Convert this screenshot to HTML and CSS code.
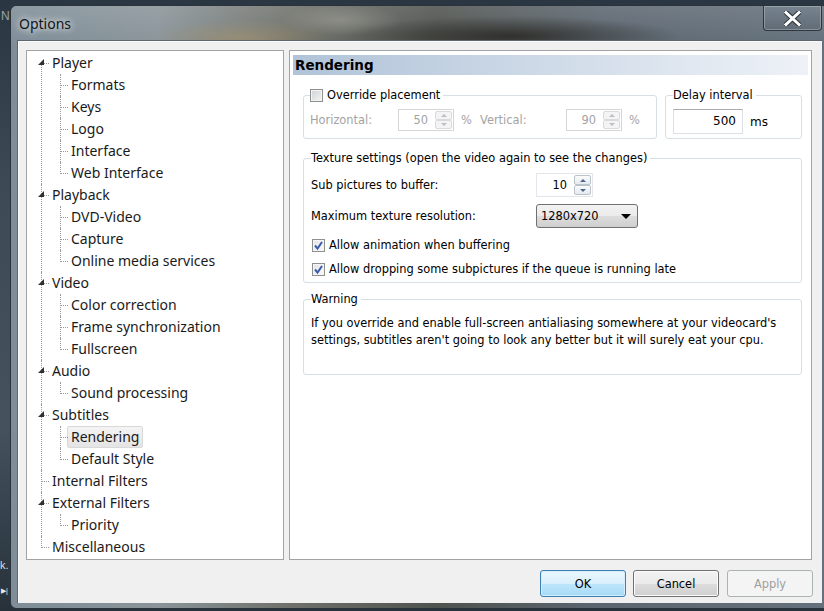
FILE: index.html
```html
<!DOCTYPE html>
<html lang="en">
<head>
    <meta charset="UTF-8">
    <title>Options</title>
    <link rel="stylesheet" href="styles.css">
</head>
<body>
    <div class="desktop">
        <div class="edge">
            <span class="edge-n">N</span>
            <span class="edge-k">k.</span>
            <span class="edge-play">&#9654;|</span>
        </div>
        <div class="window">
            <div class="titlebar">
                <span class="title">Options</span>
                <span class="close">
                    <svg width="17" height="15" viewBox="0 0 17 15">
                        <path d="M2 1.5 L15 13.5 M15 1.5 L2 13.5" stroke="#2b3138" stroke-width="5" stroke-linecap="square"/>
                        <path d="M2 1.5 L15 13.5 M15 1.5 L2 13.5" stroke="#fff" stroke-width="3" stroke-linecap="square"/>
                    </svg>
                </span>
            </div>
            <div class="client">
                <div class="main">
                    <div class="tree-box">
                        <ul class="tree">
                            <li class="open"><span class="toggle"></span><span class="label">Player</span>
                                <ul>
                                    <li><span class="label">Formats</span></li>
                                    <li><span class="label">Keys</span></li>
                                    <li><span class="label">Logo</span></li>
                                    <li><span class="label">Interface</span></li>
                                    <li><span class="label">Web Interface</span></li>
                                </ul>
                            </li>
                            <li class="open"><span class="toggle"></span><span class="label">Playback</span>
                                <ul>
                                    <li><span class="label">DVD-Video</span></li>
                                    <li><span class="label">Capture</span></li>
                                    <li><span class="label">Online media services</span></li>
                                </ul>
                            </li>
                            <li class="open"><span class="toggle"></span><span class="label">Video</span>
                                <ul>
                                    <li><span class="label">Color correction</span></li>
                                    <li><span class="label">Frame synchronization</span></li>
                                    <li><span class="label">Fullscreen</span></li>
                                </ul>
                            </li>
                            <li class="open"><span class="toggle"></span><span class="label">Audio</span>
                                <ul>
                                    <li><span class="label">Sound processing</span></li>
                                </ul>
                            </li>
                            <li class="open"><span class="toggle"></span><span class="label">Subtitles</span>
                                <ul>
                                    <li><span class="label selected">Rendering</span></li>
                                    <li><span class="label">Default Style</span></li>
                                </ul>
                            </li>
                            <li><span class="label">Internal Filters</span></li>
                            <li class="open"><span class="toggle"></span><span class="label">External Filters</span>
                                <ul>
                                    <li><span class="label">Priority</span></li>
                                </ul>
                            </li>
                            <li><span class="label">Miscellaneous</span></li>
                        </ul>
                    </div>

                    <div class="page">
                        <div class="page-title">Rendering</div>
                        <div class="page-body">
                            <div class="top-row">
                                <fieldset class="group override">
                                    <legend><span class="check"></span>Override placement</legend>
                                    <div class="place-row">
                                        <span class="lbl-h">Horizontal:</span>
                                        <span class="spin disabled"><span class="spin-val">50</span><span class="spin-btns"><span class="up"></span><span class="down"></span></span></span>
                                        <span class="pct">%</span>
                                        <span class="lbl-v">Vertical:</span>
                                        <span class="spin disabled"><span class="spin-val">90</span><span class="spin-btns"><span class="up"></span><span class="down"></span></span></span>
                                        <span class="pct">%</span>
                                    </div>
                                </fieldset>
                                <fieldset class="group delay">
                                    <legend>Delay interval</legend>
                                    <div class="delay-row">
                                        <span class="textbox">500</span>
                                        <span>ms</span>
                                    </div>
                                </fieldset>
                            </div>

                            <fieldset class="group texture">
                                <legend>Texture settings (open the video again to see the changes)</legend>
                                <div class="field-row">
                                    <span class="field-label">Sub pictures to buffer:</span>
                                    <span class="spin small"><span class="spin-val">10</span><span class="spin-btns"><span class="up"></span><span class="down"></span></span></span>
                                </div>
                                <div class="field-row">
                                    <span class="field-label">Maximum texture resolution:</span>
                                    <span class="combo">1280x720<span class="arrow"></span></span>
                                </div>
                                <div class="check-row first">
                                    <span class="check on"><svg width="11" height="11" viewBox="0 0 11 11"><path d="M2 5.5 L4.5 8.5 L9 2" fill="none" stroke="#3d5ea6" stroke-width="2"/></svg></span>
                                    <span>Allow animation when buffering</span>
                                </div>
                                <div class="check-row">
                                    <span class="check on"><svg width="11" height="11" viewBox="0 0 11 11"><path d="M2 5.5 L4.5 8.5 L9 2" fill="none" stroke="#3d5ea6" stroke-width="2"/></svg></span>
                                    <span>Allow dropping some subpictures if the queue is running late</span>
                                </div>
                            </fieldset>

                            <fieldset class="group warning">
                                <legend>Warning</legend>
                                <p>If you override and enable full-screen antialiasing somewhere at your videocard's settings, subtitles aren't going to look any better but it will surely eat your cpu.</p>
                            </fieldset>
                        </div>
                    </div>
                </div>

                <div class="buttons">
                    <button type="button" class="btn default">OK</button>
                    <button type="button" class="btn">Cancel</button>
                    <button type="button" class="btn" disabled>Apply</button>
                </div>
            </div>
        </div>
    </div>
</body>
</html>
```

FILE: styles.css
```css
body, html {
    margin: 0; padding: 0; width: 824px; height: 611px; overflow: hidden;
    background: #1d262e;
    font-family: 'DejaVu Sans', Tahoma, Verdana, sans-serif;
}
.desktop {
    display: flex; align-items: flex-start; height: 611px; padding-top: 5px; box-sizing: border-box;
    background: linear-gradient(180deg, #2a3641 0%, #3c4a55 30%, #44525c 70%, #27313a 100%);
}
.edge {
    width: 10px; height: 606px; flex: none; display: flex; flex-direction: column; overflow: hidden;
    color: #cfd6dc; font-family: 'Liberation Sans', Arial, sans-serif;
}
.edge-n { font-size: 12px; margin: 4px 0 0 1px; color: #9aa4ac; }
.edge-k { margin-top: auto; font-size: 11px; color: #d8dde0; }
.edge-play { font-size: 7px; margin: 16px 0 16px 1px; color: #e8e8e8; }

/* glass frame */
.window {
    width: 819px; flex: none; box-sizing: border-box;
    padding: 0 7px 5px 6px; display: flex; flex-direction: column;
    border-radius: 6px 0 0 6px;
    border: 1px solid #2a333c; border-right: none;
    background:
        radial-gradient(ellipse 90px 18px at 230px 32px, rgba(170,150,110,.55), transparent),
        radial-gradient(ellipse 170px 20px at 500px 30px, rgba(35,33,28,.75), transparent),
        radial-gradient(ellipse 60px 16px at 330px 14px, rgba(190,190,180,.35), transparent),
        linear-gradient(180deg, rgba(255,255,255,.12), rgba(255,255,255,0) 40px),
        linear-gradient(90deg, #7e8d98 0%, #8a9499 18%, #6f716a 34%, #4f534f 52%, #5c6670 72%, #65717c 100%);
}
.titlebar {
    height: 34px; flex: none; display: flex; justify-content: space-between; align-items: flex-start;
}
.title {
    font-family: 'Noto Sans', 'Open Sans', sans-serif; font-size: 14px; color: #101418;
    margin: 8px 0 0 2px; text-shadow: 0 0 6px rgba(255,255,255,.9), 0 0 10px rgba(255,255,255,.6);
}
.close {
    width: 57px; height: 24px; display: flex; align-items: center; justify-content: center;
    border: 1px solid rgba(30,38,46,.8); border-top: none; border-radius: 0 0 4px 4px;
    box-shadow: inset 0 0 0 1px rgba(255,255,255,.25);
    background: linear-gradient(180deg, rgba(120,135,148,.6), rgba(90,100,110,.6));
}

.client {
    flex: none; background: #f0f0f0; display: flex; flex-direction: column;
    padding: 9px 10px 6px 8px; border-top: 1px solid #5c6770; border-left: 1px solid #5c6770;
    box-shadow: inset 1px 1px 0 #fafafa;
}
.main { display: flex; gap: 5px; height: 510px; }

/* tree */
.tree-box {
    width: 258px; flex: none; box-sizing: border-box; background: #fff; border: 1px solid #a3a3a3;
    font-family: 'Noto Sans', 'Open Sans', sans-serif; font-size: 14px; color: #1a1a1a;
}
.tree, .tree ul { list-style: none; margin: 0; }
.tree { padding: 1px 0 0 14px; }
.tree ul { padding: 0 0 0 12px; }
.tree li { position: relative; padding-left: 7px; }
.tree li::before {
    content: ""; position: absolute; left: 0; top: 0; width: 7px; height: 11px;
    border-left: 1px dotted #9a9a9a; border-bottom: 1px dotted #9a9a9a;
}
.tree li:not(:last-child)::after {
    content: ""; position: absolute; left: 0; top: 11px; bottom: 0; border-left: 1px dotted #9a9a9a;
}
.tree > li:first-child::before { top: 11px; height: 0; }
.label {
    display: inline-block; height: 20px; line-height: 20px; padding: 0 3px;
    border: 1px solid transparent; border-radius: 2px; white-space: nowrap;
}
.label.selected { background: linear-gradient(180deg, #f4f4f4, #e4e4e4); border-color: #d9d9d9; }
.toggle {
    position: absolute; left: -3px; top: 7px; width: 0; height: 0; z-index: 1;
    border-right: 6px solid #303030; border-top: 6px solid transparent;
}

/* page */
.page {
    flex: 1; background: #fff; border: 1px solid #a3a3a3; padding: 4px 3px 3px;
    font-size: 11.4px; color: #000;
}
.page-title {
    height: 20px; line-height: 20px; padding-left: 2px; font-size: 13.5px; font-weight: bold;
    background: linear-gradient(90deg, #b0c3d8 0%, #c9d6e5 40%, #eef2f7 100%);
}
.page-body { padding: 13px 6px 0 10px; }
.group {
    margin: 0; border: 1px solid #d5dfe5; border-radius: 3px; padding: 7px;
    min-width: 0;
}
.group legend { padding: 0 3px 0 0; line-height: 14px; }
.top-row { display: flex; gap: 8px; }
.override { width: 354px; box-sizing: border-box; padding-left: 6px; }
.override legend { display: flex; align-items: center; }
.delay { flex: 1; padding-bottom: 3px; }

.check {
    width: 13px; height: 13px; box-sizing: border-box; border: 1px solid #8e8f8f; margin-right: 4px;
    display: inline-flex; align-items: center; justify-content: center; flex: none;
    background: linear-gradient(135deg, #d0d2d4, #f4f4f4);
    box-shadow: inset 0 0 0 1px #f4f4f4;
}
.check.on { background: linear-gradient(135deg, #e2e4e7, #fbfbfb); }

.place-row { display: flex; align-items: center; color: #a3a3a3; }
.lbl-h { width: 88px; }
.lbl-v { width: 86px; }
.pct { width: 19px; margin-left: 7px; }

.spin {
    display: inline-flex; width: 56px; height: 22px; box-sizing: border-box;
    border: 1px solid #abadb3; background: #fff;
}
.spin.disabled { border-color: #d6d6d6; color: #a3a3a3; }
.spin.small { width: 57px; height: 24px; border-color: #e3e6ea; }
.spin-val { flex: 1; text-align: right; padding-right: 7px; align-self: center; }
.spin-btns { width: 17px; display: flex; flex-direction: column; margin: 1px 1px 1px 0; }
.spin-btns span {
    flex: 1; display: flex; align-items: center; justify-content: center;
    border: 1px solid #b9c3cc; border-radius: 2px;
    background: linear-gradient(180deg, #fafbfc, #e6eaee);
}
.spin-btns .up::before, .spin-btns .down::before {
    content: ""; width: 0; height: 0; border-left: 3px solid transparent; border-right: 3px solid transparent;
}
.spin-btns .up::before { border-bottom: 3px solid #4e6790; }
.spin-btns .down::before { border-top: 3px solid #4e6790; }
.spin.disabled .spin-btns span { border-color: #dadada; background: #f4f4f4; }
.spin.disabled .up::before { border-bottom-color: #b8bfc7; }
.spin.disabled .down::before { border-top-color: #b8bfc7; }

.delay-row { display: flex; align-items: center; gap: 7px; font-size: 12px; }
.textbox {
    width: 70px; height: 25px; box-sizing: border-box; text-align: right; line-height: 23px;
    padding-right: 6px; border: 1px solid #dbdfe6; border-top-color: #abadb3; background: #fff;
}

.texture { margin-top: 12px; padding: 8px 7px 5px 7px; }
.field-row { display: flex; align-items: center; height: 24px; margin-bottom: 7px; }
.field-label { width: 225px; }
.combo {
    width: 102px; height: 24px; box-sizing: border-box; display: flex; align-items: center;
    justify-content: space-between; padding: 0 4px; border: 1px solid #707070; border-radius: 3px;
    background: linear-gradient(180deg, #f2f2f2 0%, #ebebeb 50%, #dddddd 51%, #cfcfcf 100%);
}
.combo .arrow { width: 0; height: 0; border-left: 5px solid transparent; border-right: 5px solid transparent; border-top: 5px solid #000; margin-right: 2px; }
.check-row { display: flex; align-items: center; height: 16px; margin-top: 8px; padding-left: 1px; }
.check-row.first { margin-top: 9px; }

.warning { margin-top: 9px; padding: 9px 7px 25px 7px; }
.warning p { margin: 0; line-height: 17px; }

/* buttons */
.buttons { display: flex; justify-content: flex-end; gap: 7px; margin: 10px -1px 0 0; }
.btn {
    width: 86px; height: 27px; font-family: 'DejaVu Sans', Tahoma, sans-serif; font-size: 11.4px; color: #000;
    border: 1px solid #707070; border-radius: 3px; padding: 0;
    background: linear-gradient(180deg, #f2f2f2 0%, #ebebeb 50%, #dddddd 51%, #cfcfcf 100%);
    box-shadow: inset 0 0 0 1px #fcfcfc;
}
.btn.default {
    border-color: #3c7fb1;
    background: linear-gradient(180deg, #eaf6fd 0%, #d9f0fc 50%, #bee6fd 51%, #a7d9f5 100%);
    box-shadow: inset 0 0 0 1px #d6eefc;
}
.btn + .btn[disabled] { margin-left: 1px; }
.btn[disabled] { color: #a0a0a0; background: #f4f4f4; border-color: #adb2b5; box-shadow: none; }
```
